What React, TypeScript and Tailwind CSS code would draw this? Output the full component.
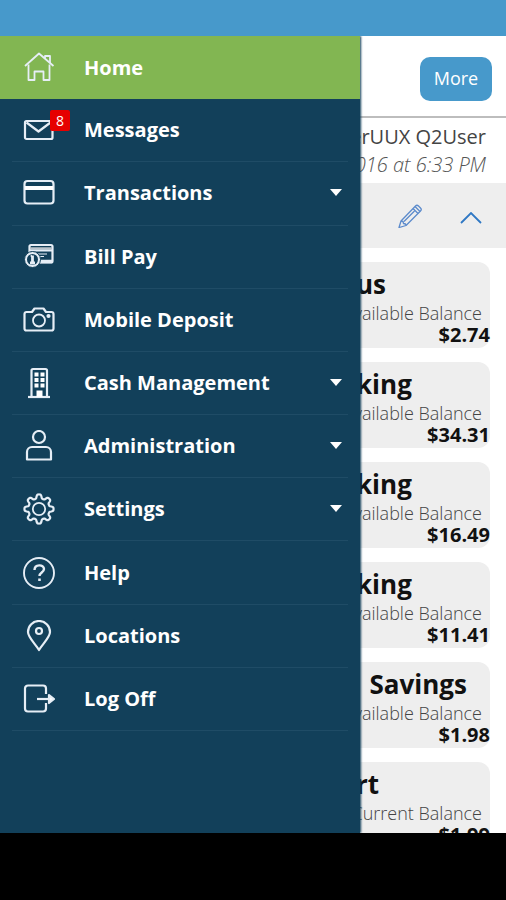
import type { ReactNode } from 'react';

type MenuItem = {
  label: string;
  icon: ReactNode;
  expandable?: boolean;
  badge?: number;
};

// outline of the settings gear: 8 rounded teeth around (16, 16)
const gearPoints = Array.from({ length: 128 }, (_, i) => {
  const angle = (i / 128) * Math.PI * 2;
  const r = 12.6 + 2 * Math.tanh(2 * Math.cos(angle * 8));
  return `${(16 + r * Math.cos(angle)).toFixed(2)},${(16 + r * Math.sin(angle)).toFixed(2)}`;
}).join(" ");

// all menu icons share a 32x32 grid
const menu: MenuItem[] = [
  {
    label: "Home",
    icon: (
      <>
        <path d="M2 14 16 1.500l14.500 12.500" strokeWidth="1.800" />
        <path d="M5.500 12.500V28h6v-8.500h9V28h6V12.500" strokeWidth="1.800" />
        <path d="M22 6.500V4h5v7" strokeWidth="1.800" />
      </>
    ),
  },
  {
    label: "Messages",
    badge: 8,
    icon: (
      <>
        <rect x="2" y="7" width="27.500" height="18" rx="1.500" />
        <path d="m3.500 8.500 12 9 12-9" />
      </>
    ),
  },
  {
    label: "Transactions",
    expandable: true,
    icon: (
      <>
        <rect x="1.500" y="4" width="29" height="22.500" rx="3" />
        <path d="M2 11h28" stroke="white" strokeWidth="4" />
      </>
    ),
  },
  {
    label: "Bill Pay",
    icon: (
      <>
        <rect x="6.500" y="4" width="23" height="17.500" rx="1.500" />
        <path d="M7 7.500h22" stroke="#b8c2ca" strokeWidth="2.500" />
        <path d="M7 9.500h22" strokeWidth="2" />
        <path d="M14 13h10M16 15.500h5" strokeWidth="1" />
        <path d="M16 20.500h13" strokeWidth="3.500" />
        <circle cx="9.500" cy="18.500" r="8" fill="#e6eef6" stroke="#12405a" strokeWidth="1" />
        <circle cx="9.500" cy="18.500" r="5.500" fill="#12405a" stroke="none" />
        <path d="M9.500 14.500v7.500M8 16l1.500-1M7 22h5" strokeWidth="2.800" />
      </>
    ),
  },
  {
    label: "Mobile Deposit",
    icon: (
      <>
        <path d="M3.500 8H9l2.500-3.500h9L23 8h5.500a2 2 0 0 1 2 2v14.500a2 2 0 0 1-2 2h-25a2 2 0 0 1-2-2V10a2 2 0 0 1 2-2Z" />
        <circle cx="16" cy="16.500" r="6" strokeWidth="1.800" />
        <circle cx="25.500" cy="12" r="1" />
      </>
    ),
  },
  {
    label: "Cash Management",
    expandable: true,
    icon: (
      <>
        <path d="M8.500 30V3.500a1.500 1.500 0 0 1 1.500-1.500h12.500a1.500 1.500 0 0 1 1.500 1.500V30" />
        <path d="M5 30h22" />
        <path d="M11.500 7.500h4M17.500 7.500h4M11.500 13h4M17.500 13h4M11.500 18.500h4M17.500 18.500h4" stroke="white" strokeWidth="3.800" />
        <path d="M16.500 23.500V30" stroke="white" strokeWidth="6" />
      </>
    ),
  },
  {
    label: "Administration",
    expandable: true,
    icon: (
      <>
        <circle cx="16" cy="7" r="6" />
        <path d="M4 29.500V22a5 5 0 0 1 5-5h14a5 5 0 0 1 5 5v7.500Z" />
      </>
    ),
  },
  {
    label: "Settings",
    expandable: true,
    icon: (
      <>
        <polygon points={gearPoints} />
        <circle cx="16" cy="16" r="6.200" strokeWidth="1.800" />
      </>
    ),
  },
  {
    label: "Help",
    icon: (
      <>
        <circle cx="16" cy="16" r="15" strokeWidth="1.900" />
        <path d="M11.500 13c0-6 9.500-6 9.500-1 0 3.500-4.500 3.500-4.500 7" strokeWidth="2.400" />
        <path d="M16.500 21.500V24" strokeWidth="2.600" />
      </>
    ),
  },
  {
    label: "Locations",
    icon: (
      <>
        <path d="M16 30C12.500 24 5 17.500 5 12a11 11 0 0 1 22 0c0 5.500-7.500 12-11 18Z" />
        <circle cx="16" cy="11" r="3" />
      </>
    ),
  },
  {
    label: "Log Off",
    icon: (
      <>
        <path d="M23 11V5.500a3 3 0 0 0-3-3H5a3 3 0 0 0-3 3v20a3 3 0 0 0 3 3h15a3 3 0 0 0 3-3V20" />
        <path d="M14 16h12" />
        <path d="m26 12 5 4-5 4Z" fill="white" />
      </>
    ),
  },
];

const accounts = [
  { name: "us", kind: "vailable Balance", amount: "$2.74" },
  { name: "king", kind: "vailable Balance", amount: "$34.31" },
  { name: "king", kind: "vailable Balance", amount: "$16.49" },
  { name: "king", kind: "vailable Balance", amount: "$11.41" },
  { name: "  Savings", kind: "vailable Balance", amount: "$1.98" },
  { name: "rt", kind: "Current Balance", amount: "$1.99" },
];

function MenuRow({ item, active }: { item: MenuItem; active: boolean }) {
  return (
    <li className={active ? "bg-[#82b652]" : "px-3"}>
      <a
        href="#"
        className={`flex h-full items-center gap-[29px] text-xl font-bold text-white ${active ? "px-[23px]" : "border-b border-[#1f4c66] pl-[11px] pr-[5px]"}`}
      >
        <span className="relative">
          <svg viewBox="0 0 32 32" className="size-8" fill="none" stroke="#e6eef6" strokeWidth="2.200" strokeLinejoin="round">
            {item.icon}
          </svg>
          {item.badge && (
            <span className="absolute -top-1 left-[27px] flex h-[21px] w-5 items-center justify-center rounded-xs bg-[#e60000] text-sm font-normal">
              {item.badge}
            </span>
          )}
        </span>
        <span className="flex-1 whitespace-nowrap">{item.label}</span>
        {item.expandable && (
          <svg viewBox="0 0 14 8" className="h-2 w-3.5" fill="white">
            <path d="M1 0h12L7 7Z" />
          </svg>
        )}
      </a>
    </li>
  );
}

export default function App() {
  return (
    <div className="flex h-screen flex-col overflow-hidden bg-white font-['Open_Sans',sans-serif]">
      <div className="h-9 shrink-0 bg-[#4799cb]" />

      <div className="flex min-h-0 flex-1 overflow-hidden">
        {/* Drawer */}
        <nav className="z-10 w-[360px] shrink-0 bg-[#12405a] shadow-[1px_0_2px_#12405a]">
          <ul className="grid h-[695px] auto-rows-fr">
            {menu.map((item, i) => (
              <MenuRow key={item.label} item={item} active={i === 0} />
            ))}
          </ul>
        </nav>

        {/* Page behind the drawer */}
        <main className="min-w-0 flex-1 overflow-hidden">
          <header className="flex h-[82px] items-center justify-end border-b-2 border-[#bdbdbd] pr-3.5 pt-1.5">
            <button className="h-11 w-[72px] rounded-[10px] bg-[#4799cb] pb-0.5 text-lg text-white">More</button>
          </header>

          <div className="flex h-[65px] flex-col items-end justify-center whitespace-nowrap pr-5 text-xl leading-7">
            <p className="text-[#444]">erUUX Q2User</p>
            <p className="font-light italic text-[#555]">016 at 6:33 PM</p>
          </div>

          <div className="flex h-[65px] items-center justify-end gap-[38px] bg-[#eeeeee] pr-6">
            <button aria-label="Edit">
              <svg viewBox="0 0 24 24" className="size-6" fill="none" stroke="#5c8bcc" strokeWidth="1.300" strokeLinejoin="round">
                <path d="M1 23.500 3 17 17.500 2Q19 0.500 20.500 2L22.500 4Q24 5.500 22.500 7L8 21.500Z" />
                <path d="m15 4.500 5 5M17 2.500l5 5M3 17l2 .5.5 2 2 .5.5 1.500M6 17.500l10.500-10.500" />
              </svg>
            </button>
            <button aria-label="Collapse">
              <svg viewBox="0 0 22 12" className="mt-1 h-3 w-[22px]" fill="none" stroke="#2f78c4" strokeWidth="1.800">
                <path d="M1 11 11 1l10 10" />
              </svg>
            </button>
          </div>

          <ul className="flex flex-col gap-3.5 pr-4 pt-3.5">
            {accounts.map((account, i) => (
              <li key={i} className="flex h-[86px] flex-col whitespace-nowrap rounded-r-xl bg-[#eeeeee] pt-1">
                <h2 className="-ml-1 whitespace-pre text-[26px] font-bold leading-9 text-[#111]">{account.name}</h2>
                <p className="self-end pr-2 text-lg font-light leading-[22px] text-[#444]">{account.kind}</p>
                <p className="self-end text-xl font-bold leading-[22px] text-[#111]">{account.amount}</p>
              </li>
            ))}
          </ul>
        </main>
      </div>

      <div className="h-[67px] shrink-0 bg-black" />
    </div>
  );
}
